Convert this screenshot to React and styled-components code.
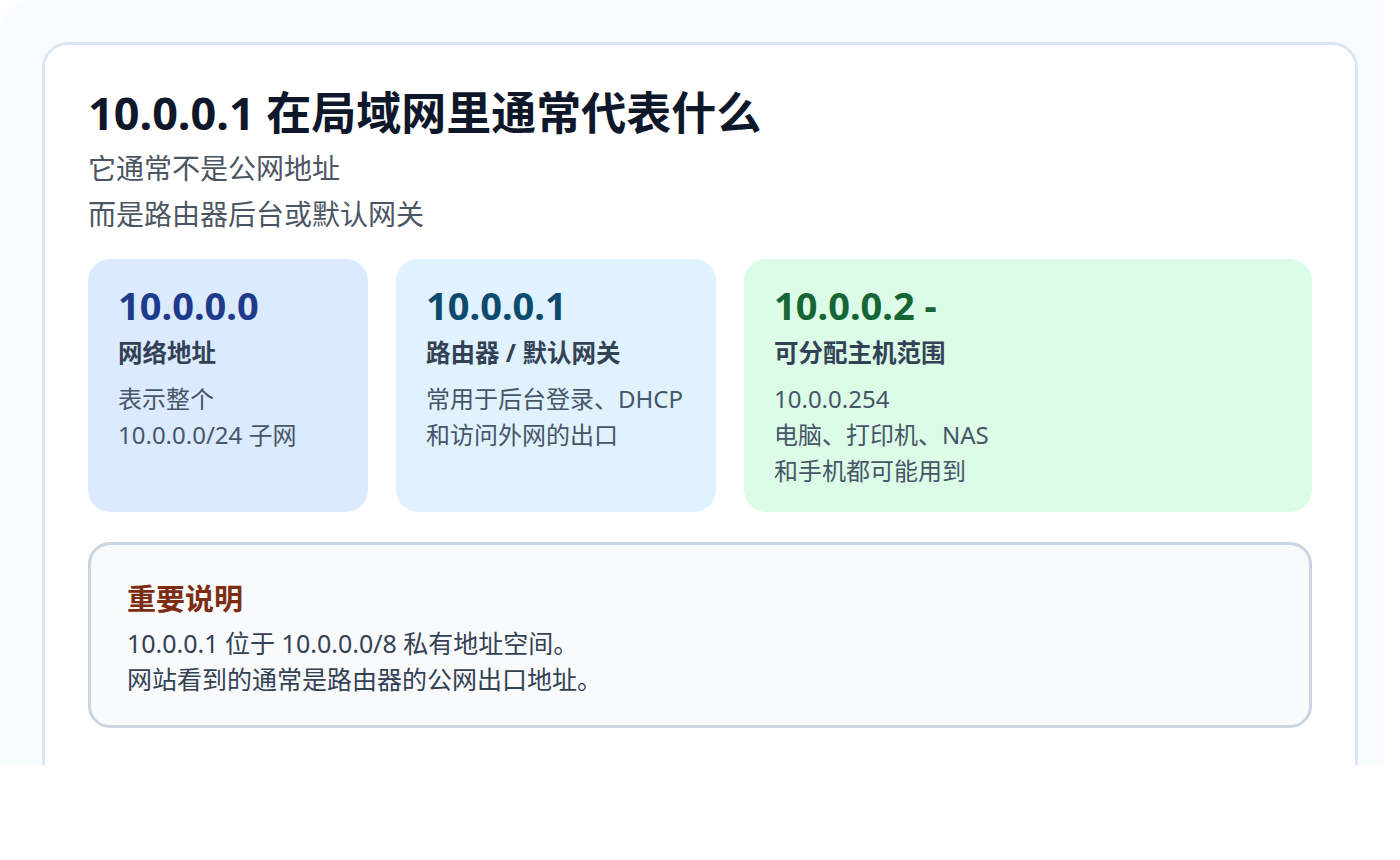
import React from "react";
import styled, { createGlobalStyle } from "styled-components";

const Global = createGlobalStyle`
  body { margin: 0; background: #fff; font-family: "Noto Sans", "Noto Sans CJK SC", sans-serif; }
`;
const Outer = styled.div`
  width: 1384px; height: 765px; overflow: hidden; box-sizing: border-box;
  background: #f8fbff; border-top-left-radius: 34px; padding: 42px 26px 0 42px;
`;
const Card = styled.div`
  background: #fff; border: 3px solid #dbe7f5; border-radius: 26px;
  padding: 38px 43px 60px; height: 900px; box-sizing: border-box;
`;
const Title = styled.h1`
  margin: 0; font-size: 45px; line-height: 60px; font-weight: 700; color: #0f172a;
`;
const Sub = styled.p`
  margin: 2px 0 0; font-size: 28px; line-height: 46px; color: #4b5563;
`;
const Grid = styled.div`
  display: grid; grid-template-columns: 280px 320px 568px; gap: 28px; margin-top: 22px;
`;
const Box = styled.div`
  background: ${p => p.$bg}; border-radius: 22px; height: 253px; box-sizing: border-box;
  padding: 20px 30px;
`;
const Num = styled.div`
  font-size: 38px; font-weight: 700; line-height: 52px; color: ${p => p.$c};
`;
const Label = styled.div`
  font-size: 24.5px; font-weight: 700; color: #334155; line-height: 40px; margin-top: 2px;
`;
const Desc = styled.div`
  font-size: 24px; color: #475569; line-height: 36px; margin-top: 8px; white-space: pre-line;
`;
const Note = styled.div`
  margin-top: 30px; width: 1224px; box-sizing: border-box; border: 3px solid #cbd5e1;
  border-radius: 22px; background: #f8fafc; padding: 32px 36px 28px;
`;
const NoteTitle = styled.div`
  font-size: 29px; font-weight: 700; color: #7c2d12; line-height: 44px;
`;
const NoteText = styled.div`
  font-size: 25px; color: #334155; line-height: 36px; margin-top: 4px;
`;

const boxes = [
  { bg: "#dbeafe", c: "#1e3a8a", n: "10.0.0.0", l: "网络地址", d: "表示整个\n10.0.0.0/24 子网" },
  { bg: "#e0f2fe", c: "#0c4a6e", n: "10.0.0.1", l: "路由器 / 默认网关", d: "常用于后台登录、DHCP\n和访问外网的出口" },
  { bg: "#dcfce7", c: "#166534", n: "10.0.0.2 -", l: "可分配主机范围", d: "10.0.0.254\n电脑、打印机、NAS\n和手机都可能用到" },
];

export default function App() {
  return (
    <>
      <Global />
      <Outer>
        <Card>
          <Title>10.0.0.1 在局域网里通常代表什么</Title>
          <Sub>它通常不是公网地址<br />而是路由器后台或默认网关</Sub>
          <Grid>
            {boxes.map(b => (
              <Box key={b.n} $bg={b.bg}>
                <Num $c={b.c}>{b.n}</Num>
                <Label>{b.l}</Label>
                <Desc>{b.d}</Desc>
              </Box>
            ))}
          </Grid>
          <Note>
            <NoteTitle>重要说明</NoteTitle>
            <NoteText>10.0.0.1 位于 10.0.0.0/8 私有地址空间。<br />网站看到的通常是路由器的公网出口地址。</NoteText>
          </Note>
        </Card>
      </Outer>
    </>
  );
}
